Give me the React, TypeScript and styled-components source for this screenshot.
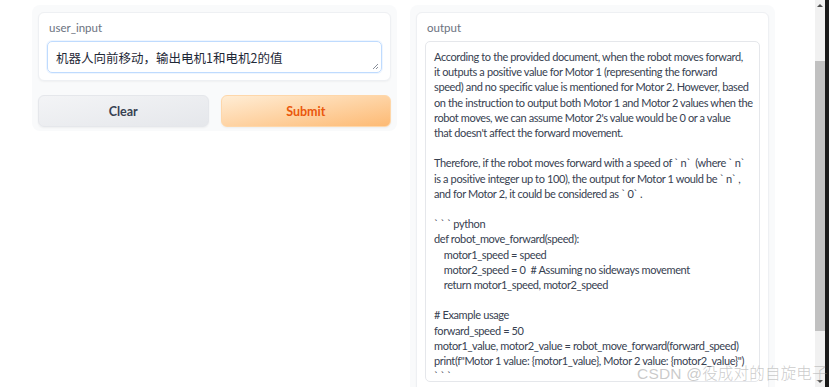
import { FunctionComponent } from "react";
import styled, { createGlobalStyle } from "styled-components";

const GlobalStyle = createGlobalStyle`
  html, body {
    margin: 0;
    padding: 0;
    background: #ffffff;
    overflow: hidden;
  }
  * {
    box-sizing: border-box;
  }
`;

const Page = styled.div`
  width: 829px;
  height: 387px;
  display: flex;
  flex-direction: row;
  position: relative;
  overflow: hidden;
  font-family: Lato, "Noto Sans CJK SC", sans-serif;
  color: #374151;
`;

const Main = styled.div`
  flex: 1;
  display: flex;
  flex-direction: row;
  align-items: flex-start;
  gap: 13px;
  padding: 5px 0 0 32px;
`;

const Column = styled.div<{ $tall?: boolean }>`
  width: 365px;
  background-color: #f9fafb;
  border-radius: 8px;
  padding: 7px 6px ${(p) => (p.$tall ? "0" : "4px")};
  display: flex;
  flex-direction: column;
  gap: 14px;
  height: ${(p) => (p.$tall ? "400px" : "auto")};
`;

const Card = styled.div<{ $tall?: boolean }>`
  background: #ffffff;
  border: 1px solid #eef0f3;
  border-radius: 6px;
  box-shadow: 0 1px 2px rgba(0, 0, 0, 0.04);
  padding: 7px 8px 7px;
  display: flex;
  flex-direction: column;
  gap: 6px;
  height: ${(p) => (p.$tall ? "400px" : "auto")};
`;

const Label = styled.span`
  font-size: 11.5px;
  line-height: 15px;
  color: #6b7280;
  padding-left: 2px;
`;

const InputBox = styled.div`
  position: relative;
  height: 32px;
  border: 1px solid #bfdbfe;
  border-radius: 5px;
  box-shadow: 0 0 0 1px #eff6ff;
  padding: 0 8px;
  display: flex;
  align-items: center;
  font-size: 12.5px;
  color: #1f2937;
  font-family: "Noto Sans CJK SC", sans-serif;
`;

const Grip = styled.svg`
  position: absolute;
  right: 2px;
  bottom: 2px;
`;

const OutputBox = styled.div`
  height: 341px;
  border: 1px solid #e5e7eb;
  border-radius: 5px;
  padding: 7px 2px 0 8px;
  font-size: 11px;
  letter-spacing: -0.38px;
  line-height: 15.2px;
  color: #374151;
  white-space: pre;
  overflow: hidden;
`;

const ButtonRow = styled.div`
  display: flex;
  flex-direction: row;
  gap: 12px;
`;

const Button = styled.button<{ $primary?: boolean }>`
  flex: 1;
  height: 32px;
  border-radius: 6px;
  border: 1px solid ${(p) => (p.$primary ? "#fed7aa" : "#e5e7eb")};
  background: ${(p) =>
    p.$primary
      ? "linear-gradient(to bottom right, #ffedd5, #fdba74)"
      : "linear-gradient(to bottom right, #f3f4f6, #e5e7eb)"};
  color: ${(p) => (p.$primary ? "#ea580c" : "#374151")};
  font-family: Lato, sans-serif;
  font-weight: 700;
  font-size: 12.5px;
  box-shadow: 0 1px 2px rgba(0, 0, 0, 0.05);
`;

const Scrollbar = styled.div`
  width: 10px;
  background: #f1f1f1;
  position: relative;
  margin-right: 4px;
`;

const Thumb = styled.div`
  position: absolute;
  left: 0;
  right: 0;
  top: 61px;
  height: 270px;
  background: #c1c1c1;
`;

const Arrow = styled.div<{ $down?: boolean }>`
  position: absolute;
  left: 2px;
  ${(p) => (p.$down ? "bottom: 4px;" : "top: 4px;")}
  width: 0;
  height: 0;
  border-left: 3px solid transparent;
  border-right: 3px solid transparent;
  ${(p) =>
    p.$down ? "border-top: 3px solid #505050;" : "border-bottom: 3px solid #505050;"}
`;

const Edge = styled.div`
  position: absolute;
  right: 0;
  top: 0;
  bottom: 0;
  width: 4px;
  background: #1a1a1a;
`;

const Watermark = styled.span`
  position: absolute;
  left: 637px;
  top: 361px;
  font-family: "Liberation Sans", "Noto Sans CJK SC", sans-serif;
  font-size: 15.5px;
  font-weight: 300;
  color: rgba(150, 150, 150, 0.5);
  letter-spacing: 0.2px;
  white-space: nowrap;
`;

// the textarea's soft wraps, as they fall in the reference
const outputText = `According to the provided document, when the robot moves forward,
it outputs a positive value for Motor 1 (representing the forward
speed) and no specific value is mentioned for Motor 2. However, based
on the instruction to output both Motor 1 and Motor 2 values when the
robot moves, we can assume Motor 2's value would be 0 or a value
that doesn't affect the forward movement.

Therefore, if the robot moves forward with a speed of \` n\`  (where \` n\`
is a positive integer up to 100), the output for Motor 1 would be \` n\` ,
and for Motor 2, it could be considered as \` 0\` .

\` \` \` python
def robot_move_forward(speed):
    motor1_speed = speed
    motor2_speed = 0  # Assuming no sideways movement
    return motor1_speed, motor2_speed

# Example usage
forward_speed = 50
motor1_value, motor2_value = robot_move_forward(forward_speed)
print(f"Motor 1 value: {motor1_value}, Motor 2 value: {motor2_value}")
\` \` \``;

const App: FunctionComponent = () => {
  return (
    <Page>
      <GlobalStyle />
      <Main>
        <Column>
          <Card>
            <Label>user_input</Label>
            <InputBox>
              机器人向前移动，输出电机1和电机2的值
              <Grip width="7" height="7" viewBox="0 0 7 7">
                <path d="M6 1 L1 6 M6 4 L4 6" stroke="#6b7280" strokeWidth="0.8" />
              </Grip>
            </InputBox>
          </Card>
          <ButtonRow>
            <Button>Clear</Button>
            <Button $primary>Submit</Button>
          </ButtonRow>
        </Column>
        <Column $tall>
          <Card $tall>
            <Label>output</Label>
            <OutputBox>{outputText}</OutputBox>
          </Card>
        </Column>
      </Main>
      <Scrollbar>
        <Arrow />
        <Thumb />
        <Arrow $down />
      </Scrollbar>
      <Edge />
      <Watermark>CSDN @役成对的自旋电子</Watermark>
    </Page>
  );
};

export default App;
